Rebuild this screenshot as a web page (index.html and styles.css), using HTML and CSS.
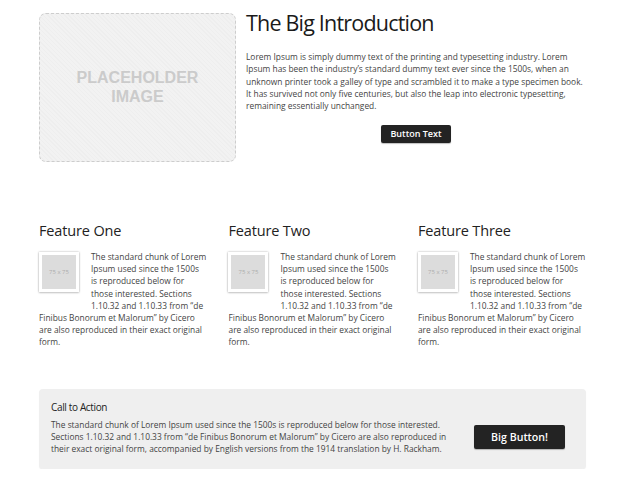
FILE: index.html
```html
<!DOCTYPE html>
<html>
<head>
<meta charset="utf-8">
<link rel="stylesheet" href="styles.css">
</head>
<body>
<div class="page">
  <section class="intro">
    <div class="placeholder"><span>PLACEHOLDER<br>IMAGE</span></div>
    <div class="intro-text">
      <h1>The Big Introduction</h1>
      <p>Lorem Ipsum is simply dummy text of the printing and typesetting industry. Lorem Ipsum has been the industry’s standard dummy text ever since the 1500s, when an unknown printer took a galley of type and scrambled it to make a type specimen book. It has survived not only five centuries, but also the leap into electronic typesetting, remaining essentially unchanged.</p>
      <div class="btn-row"><a class="btn">Button Text</a></div>
    </div>
  </section>

  <section class="features">
    <div class="feature">
      <h2>Feature One</h2>
      <div class="thumb"><span>75 x 75</span></div>
      <p>The standard chunk of Lorem Ipsum used since the 1500s is reproduced below for those interested. Sections 1.10.32 and 1.10.33 from “de Finibus Bonorum et Malorum” by Cicero are also reproduced in their exact original form.</p>
    </div>
    <div class="feature">
      <h2>Feature Two</h2>
      <div class="thumb"><span>75 x 75</span></div>
      <p>The standard chunk of Lorem Ipsum used since the 1500s is reproduced below for those interested. Sections 1.10.32 and 1.10.33 from “de Finibus Bonorum et Malorum” by Cicero are also reproduced in their exact original form.</p>
    </div>
    <div class="feature">
      <h2>Feature Three</h2>
      <div class="thumb"><span>75 x 75</span></div>
      <p>The standard chunk of Lorem Ipsum used since the 1500s is reproduced below for those interested. Sections 1.10.32 and 1.10.33 from “de Finibus Bonorum et Malorum” by Cicero are also reproduced in their exact original form.</p>
    </div>
  </section>

  <section class="cta">
    <h3>Call to Action</h3>
    <div class="cta-row">
      <p>The standard chunk of Lorem Ipsum used since the 1500s is reproduced below for those interested. Sections 1.10.32 and 1.10.33 from “de Finibus Bonorum et Malorum” by Cicero are also reproduced in their exact original form, accompanied by English versions from the 1914 translation by H. Rackham.</p>
      <a class="btn btn-big">Big Button!</a>
    </div>
  </section>
</div>
</body>
</html>
```

FILE: styles.css
```css
html, body {
  margin: 0;
  padding: 0;
  background: #fff;
}
body {
  font-family: "Open Sans", "Liberation Sans", sans-serif;
  color: #444;
}
.page {
  width: 547px;
  padding: 13px 0 0 39px;
}
.intro {
  display: flex;
  gap: 10px;
}
.placeholder {
  box-sizing: border-box;
  width: 197px;
  height: 149px;
  flex: none;
  border: 1px dashed #cdcdcd;
  border-radius: 7px;
  background-color: #f2f2f2;
  background-image: repeating-linear-gradient(45deg, rgba(0,0,0,0.015) 0 1px, transparent 1px 3px);
  display: flex;
  align-items: center;
  justify-content: center;
  text-align: center;
}
.placeholder span {
  font-family: "Liberation Sans", Arial, sans-serif;
  font-weight: bold;
  font-size: 16px;
  line-height: 19px;
  color: #cbcbcb;
  margin-top: -2px;
}
.intro-text {
  flex: 1;
}
h1 {
  margin: -4px 0 0;
  font-size: 21.5px;
  font-weight: 400;
  color: #1a1a1a;
  line-height: 28px;
  letter-spacing: -0.8px;
}
.intro-text p {
  margin: 14px 0 0;
  font-size: 8.4px;
  line-height: 12.3px;
}
.btn-row {
  display: flex;
  justify-content: center;
  margin-top: 12.5px;
}
.btn {
  display: inline-flex;
  align-items: center;
  justify-content: center;
  box-sizing: border-box;
  background: #232323;
  color: #fff;
  font-weight: 600;
  font-size: 9px;
  width: 70px;
  height: 18px;
  border-radius: 2px;
  box-shadow: 0 1px 1px rgba(0,0,0,0.25);
}
.features {
  display: grid;
  grid-template-columns: repeat(3, 167.7px);
  column-gap: 21.8px;
  margin-top: 59px;
}
h2 {
  margin: 0;
  font-size: 14.5px;
  font-weight: 400;
  line-height: 20px;
  color: #222;
  letter-spacing: -0.15px;
}
.feature p {
  margin: 10px 0 0;
  font-size: 8.4px;
  line-height: 12.2px;
}
.thumb {
  float: left;
  box-sizing: border-box;
  width: 40px;
  height: 40px;
  padding: 3px;
  margin: 11px 12px 14px 0;
  background: #fff;
  box-shadow: 0 0 2px rgba(0,0,0,0.3), 0 1px 2px rgba(0,0,0,0.15);
}
.thumb span {
  display: flex;
  align-items: center;
  justify-content: center;
  width: 100%;
  height: 100%;
  background: #dcdcdc;
  color: #acacac;
  font-size: 6px;
}
.cta {
  margin-top: 40px;
  background: #efefef;
  border-radius: 4px;
  padding: 11px 21px 14px 12px;
  box-shadow: 0 1px 1px rgba(0,0,0,0.05);
}
h3 {
  margin: 0;
  font-size: 10px;
  font-weight: 400;
  line-height: 14px;
  color: #222;
  letter-spacing: -0.35px;
}
.cta-row {
  display: flex;
  align-items: center;
  gap: 12px;
  margin-top: 5px;
}
.cta-row p {
  flex: 1;
  margin: 0;
  font-size: 8.4px;
  line-height: 12.2px;
}
.btn-big {
  flex: none;
  width: 91px;
  height: 24px;
  font-size: 10.6px;
}
```
